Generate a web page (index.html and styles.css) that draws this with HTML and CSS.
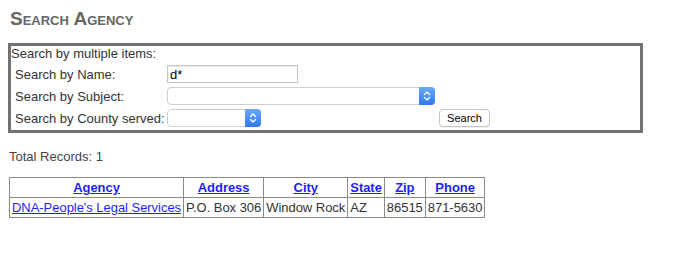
FILE: index.html
```html
<!DOCTYPE HTML><html>
<head>
  <title>Search Agency</title>
  <meta name="viewport" content="width=device-width, initial-scale=1">
  <link rel="stylesheet" href="styles.css">
</head>
<body>
  <div class="page">
    <h2 class="title">Search Agency</h2>
    <form class="search_box">
      <div class="intro">Search by multiple items:</div>
      <div class="fields">
        <label class="label" for="name">Search by Name:</label>
        <div class="cell"><input id="name" class="text_input" type="text" value="d*"></div>
        <div></div>

        <label class="label" for="subject">Search by Subject:</label>
        <div class="cell">
          <span class="select_wrap wide">
            <select id="subject" class="select"><option></option></select>
            <svg class="stepper" width="16" height="18" viewBox="0 0 16 18">
              <defs>
                <linearGradient id="blue1" x1="0" y1="0" x2="0" y2="1">
                  <stop offset="0" stop-color="#6aaaf9"/>
                  <stop offset="1" stop-color="#2f78f2"/>
                </linearGradient>
              </defs>
              <path d="M0 0 H12 A4 4 0 0 1 16 4 V14 A4 4 0 0 1 12 18 H0 Z" fill="url(#blue1)"/>
              <path d="M5.5 7.5 L8 5 L10.5 7.5 M5.5 10.5 L8 13 L10.5 10.5" stroke="#fff" stroke-width="1.4" fill="none" stroke-linecap="round" stroke-linejoin="round"/>
            </svg>
          </span>
        </div>
        <div></div>

        <label class="label" for="county">Search by County served:</label>
        <div class="cell">
          <span class="select_wrap narrow">
            <select id="county" class="select"><option></option></select>
            <svg class="stepper" width="16" height="18" viewBox="0 0 16 18">
              <defs>
                <linearGradient id="blue2" x1="0" y1="0" x2="0" y2="1">
                  <stop offset="0" stop-color="#6aaaf9"/>
                  <stop offset="1" stop-color="#2f78f2"/>
                </linearGradient>
              </defs>
              <path d="M0 0 H12 A4 4 0 0 1 16 4 V14 A4 4 0 0 1 12 18 H0 Z" fill="url(#blue2)"/>
              <path d="M5.5 7.5 L8 5 L10.5 7.5 M5.5 10.5 L8 13 L10.5 10.5" stroke="#fff" stroke-width="1.4" fill="none" stroke-linecap="round" stroke-linejoin="round"/>
            </svg>
          </span>
        </div>
        <div class="cell"><button type="button" class="button">Search</button></div>
      </div>
    </form>

    <p class="total">Total Records: 1</p>

    <table class="results">
      <tr>
        <th><a href="#">Agency</a></th>
        <th><a href="#">Address</a></th>
        <th><a href="#">City</a></th>
        <th><a href="#">State</a></th>
        <th><a href="#">Zip</a></th>
        <th><a href="#">Phone</a></th>
      </tr>
      <tr>
        <td><a href="#">DNA-People's Legal Services</a></td>
        <td>P.O. Box 306</td>
        <td>Window Rock</td>
        <td>AZ</td>
        <td>86515</td>
        <td>871-5630</td>
      </tr>
    </table>
  </div>
</body>
</html>
```

FILE: styles.css
```css
html {
  font-family: "Liberation Sans", Arial, Helvetica, sans-serif;
}
body {
  margin: 0;
  color: #333;
  font-size: 13px;
}
.page {
  padding: 7px 8px;
}
.title {
  font-size: 19px;
  font-weight: bold;
  font-variant: small-caps;
  color: #666;
  margin: 0 0 13px 2px;
  line-height: 23px;
}
.search_box {
  border: 3px solid #727272;
  width: 629px;
  margin: 0;
  padding: 0 0 3px 0;
}
.intro {
  line-height: 15px;
}
.fields {
  display: grid;
  grid-template-columns: 152px 272px auto;
  row-gap: 4px;
  margin-top: 4px;
  padding-left: 4px;
}
.label {
  display: flex;
  align-items: center;
  height: 18px;
}
.cell {
  display: flex;
  align-items: center;
  height: 18px;
}
.text_input {
  box-sizing: border-box;
  width: 131px;
  height: 18px;
  margin: 0;
  padding: 0 2px;
  border: 1px solid #c4c4c4;
  box-shadow: inset 0 1px 1px rgba(0,0,0,.08);
  font-family: "Liberation Sans", Arial, sans-serif;
  font-size: 13px;
  color: #000;
  outline: none;
}
.select_wrap {
  position: relative;
  display: block;
  height: 18px;
}
.select_wrap.wide {
  width: 268px;
}
.select_wrap.narrow {
  width: 94px;
}
.select {
  -webkit-appearance: none;
  appearance: none;
  box-sizing: border-box;
  width: 100%;
  height: 18px;
  margin: 0;
  border: 1px solid #cfcfcf;
  border-radius: 4px;
  background: #fff;
  outline: none;
}
.stepper {
  position: absolute;
  top: 0;
  right: 0;
}
.button {
  box-sizing: border-box;
  width: 51px;
  height: 18px;
  margin: 0;
  padding: 0;
  font-family: "Liberation Sans", Arial, sans-serif;
  font-size: 11px;
  color: #000;
  background: #fff;
  border: 1px solid #c6c6c6;
  border-radius: 4px;
  box-shadow: 0 1px 0 rgba(0,0,0,.06);
}
.total {
  margin: 16px 0 0 1px;
  line-height: 15px;
  color: #444;
}
.results {
  border-collapse: collapse;
  margin: 13px 0 0 1px;
  border: 1px solid #8a8a8a;
  color: #333;
  letter-spacing: -0.04px;
}
.results th,
.results td {
  border: 1px solid #8a8a8a;
  padding: 2px;
  line-height: 15px;
  white-space: nowrap;
}
.results th {
  text-align: center;
  font-weight: bold;
}
.results td {
  text-align: left;
}
.results a {
  color: #1f1fee;
}
```
